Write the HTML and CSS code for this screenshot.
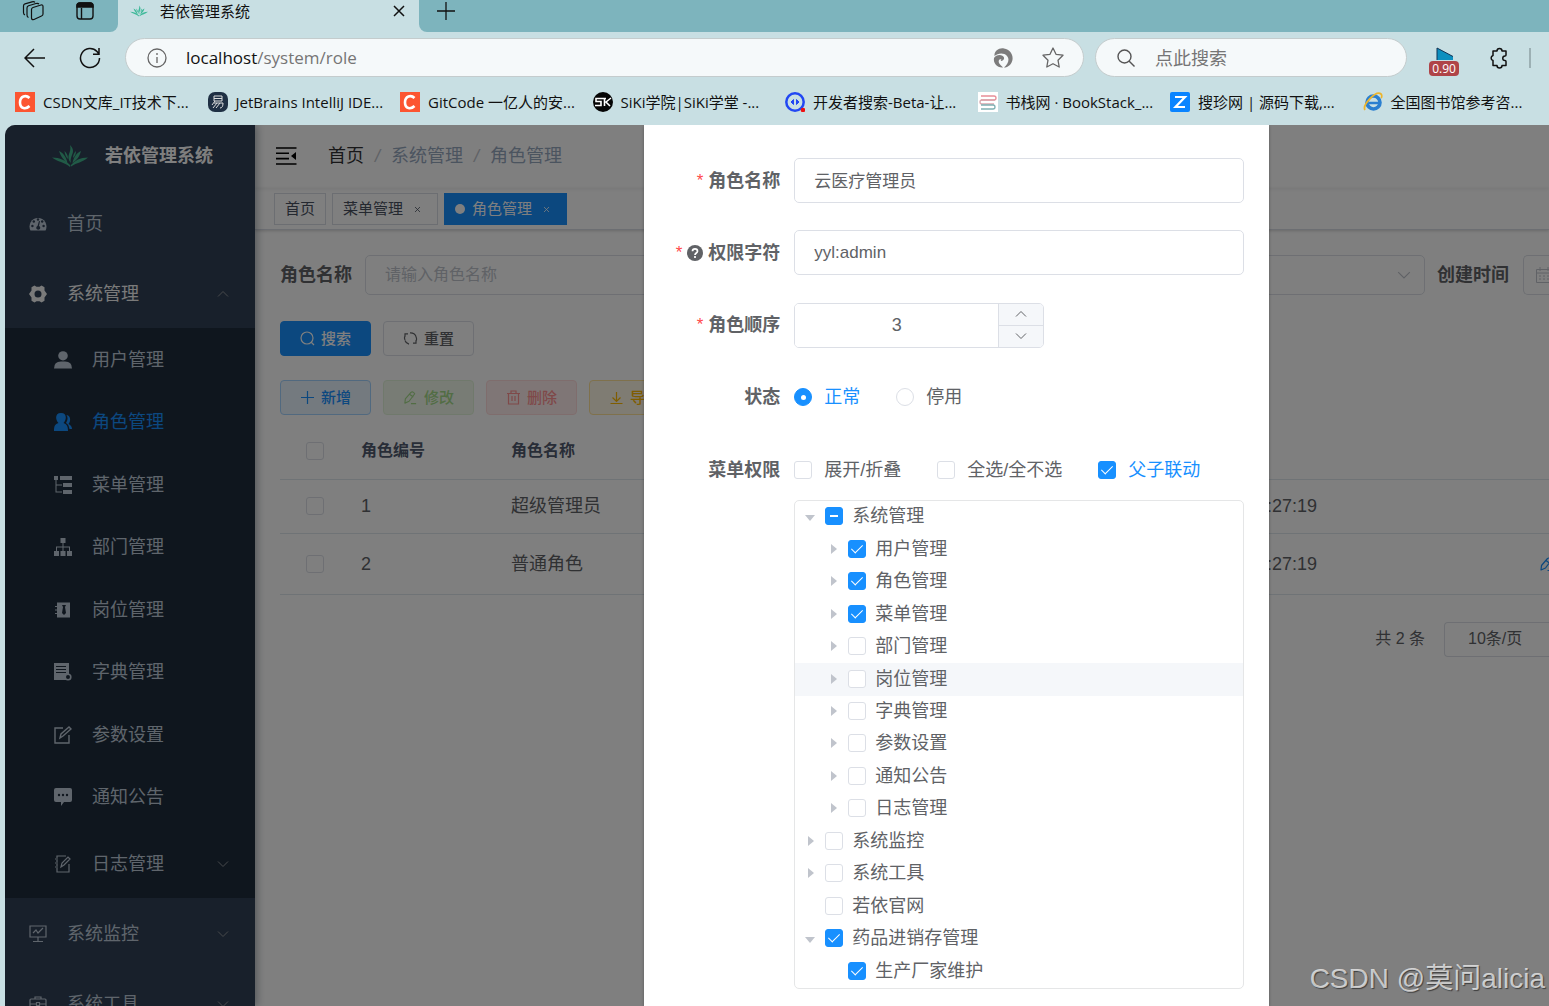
FILE: index.html
```html
<!DOCTYPE html>
<html lang="zh-CN">
<head>
<meta charset="utf-8">
<title>若依管理系统</title>
<link rel="stylesheet" href="styles.css">
</head>
<body>
<svg class="sprite" aria-hidden="true">
  <symbol id="leaf" viewBox="0 0 36 22">
    <path d="M18 0c3 3 4 6 2 10-1 3-2 5-1 8-3-3-3-6-2-9s2-5 1-9zM7 6c4 2 7 5 8.500 12C12 15 9 12 7 6zM29 6c-4 2-7 5-8.500 12 4-3 7-6 8.500-12zM12.500 6c2 2 3.500 4 3.500 8-2-2-3-4-3.500-8zM24 6c-2 2-3 4-3 7 2-2 3-4 3-7zM0 12.500c8 0 14 3 18.500 8l-.500 1.500C12 17 6 17 0 12.500zM36 12.500c-8 0-13 3-17 7.500v1.500c6-4 11-4 17-9z"/>
  </symbol>
  <symbol id="down" viewBox="0 0 12 12"><path d="M1 3.500l5 5 5-5" fill="none" stroke="currentColor"/></symbol>
  <symbol id="up" viewBox="0 0 12 12"><path d="M1 8.500l5-5 5 5" fill="none" stroke="currentColor"/></symbol>
  <symbol id="pen" viewBox="0 0 16 16"><path d="M2 14l.500-4.500L8.500 2.500q2-1.500 4 1.500L6.500 12 2 14zM7 4.500l4 3M8.500 14.500H14" fill="none" stroke="currentColor" stroke-width="1.200" stroke-linejoin="round"/></symbol>
  <symbol id="cmark" viewBox="0 0 20 20"><path d="M0 0h20v20H0z" fill="#fc5531"/><path d="M14.500 6C11 2.500 5 4 5 10.500s6 7 9.500 3.500" fill="none" stroke="#fff" stroke-width="2.600"/></symbol>
</svg>

<header class="browser">
  <div class="tabstrip">
    <div class="strip-left">
      <button class="ghost" aria-label="工作区"><svg width="22" height="20" viewBox="0 0 22 20" fill="none" stroke="#111" stroke-width="1.200" stroke-linejoin="round"><path d="M9.500 8.500q0-1.500 1.500-2l8-2.500q2-.500 2 1.500v7.500q0 1.500-1.500 2L12 18.500q-2.500.500-2.500-1.500zM6.500 16.500Q5 16 5 14V7q0-1.500 1.500-2.200L14 2.500q2-.500 3 .500M3 14q-1.500-.500-1.500-2.500V5q0-1.500 1.500-2.200L10 .800q2-.500 3 .500"/></svg></button>
      <button class="ghost" aria-label="标签页操作"><svg width="18" height="18" viewBox="0 0 18 18" fill="none" stroke="#111" stroke-width="1.400"><rect x="1" y="1" width="16" height="16" rx="3"/><path d="M5.500 6v11"/><path d="M1 5V4q0-3 3-3h10q3 0 3 3v1z" fill="#111"/></svg></button>
    </div>
    <div class="tab">
      <svg class="green" width="18" height="12"><use href="#leaf"/></svg>
      <span class="tab-title">若依管理系统</span>
      <button class="ghost" aria-label="关闭标签页"><svg width="12" height="12" viewBox="0 0 12 12" stroke="#111" stroke-width="1.500"><path d="M1 1l10 10M11 1L1 11"/></svg></button>
    </div>
    <div class="strip-right">
      <button class="ghost" aria-label="新建标签页"><svg width="18" height="18" viewBox="0 0 18 18" stroke="#111" stroke-width="1.300"><path d="M9 0v18M0 9h18"/></svg></button>
    </div>
  </div>

  <div class="toolbar">
    <button class="ghost" aria-label="后退"><svg width="22" height="20" viewBox="0 0 22 20" fill="none" stroke="#111" stroke-width="1.500"><path d="M10 1l-9 9 9 9M1 10h20"/></svg></button>
    <button class="ghost reload" aria-label="刷新"><svg width="22" height="22" viewBox="0 0 22 22" fill="none" stroke="#111" stroke-width="1.500"><path d="M20.500 11A9.500 9.500 0 1 1 18 4.600L20 7M20 1v6.200h-6"/></svg></button>
    <div class="pill address">
      <svg width="20" height="20" viewBox="0 0 20 20" fill="none" stroke="#666" stroke-width="1.300"><circle cx="10" cy="10" r="9"/><path d="M10 9v6M10 5v2"/></svg>
      <a class="url" href="#">localhost<span>/system/role</span></a>
      <svg width="20" height="20" viewBox="0 0 20 20" fill="#7c7c7c"><path d="M1.500 8C1 3 6-.500 11 .500c7 1 10 8 8 13-1.500 4-5 6-8 6 4-3 6-8 3-11.500S5 5 1.500 8z"/><path d="M1 10c2-4 9-4 10-.500.500 2-1 3-2.500 3.500-1 0-1-1 0-1.500-2-1-3.500 1-2.500 3.500 1 2 3 3 4 4.500C4 20 0 15 1 10z"/></svg>
      <svg class="star" width="22" height="21" viewBox="0 0 22 21" fill="none" stroke="#666" stroke-width="1.300" stroke-linejoin="round"><path d="M11 1l3 6.300 7 .900-5 5 1.200 6.800L11 16.700 4.800 20 6 13.200l-5-5 7-.900z"/></svg>
    </div>
    <div class="pill finder">
      <svg width="18" height="18" viewBox="0 0 18 18" fill="none" stroke="#555" stroke-width="1.400"><circle cx="7.500" cy="7.500" r="6.500"/><path d="M12 12l5.500 5.500"/></svg>
      <input type="text" placeholder="点此搜索" aria-label="点此搜索">
    </div>
    <button class="ghost speed" aria-label="播放速度"><svg width="20" height="14" viewBox="0 0 20 14"><path d="M3 1l16 8.500V13H3z" fill="#0d8fbf"/><path d="M3 13V1l16 8.500" fill="none" stroke="#135"/></svg><span>0.90</span></button>
    <button class="ghost" aria-label="扩展"><svg width="22" height="22" viewBox="0 0 22 22" fill="none" stroke="#111" stroke-width="1.500" stroke-linejoin="round"><path d="M5 4h4a2.500 2.500 0 0 1 5 0h4v4q0 1-1 1a2.200 2.200 0 0 0 0 4.500q1 0 1 1v4h-4a2.500 2.500 0 0 1-5 0H5v-5a2.600 2.600 0 0 1 0-5z"/></svg></button>
    <span class="divider"></span>
  </div>

  <nav class="bookmarks" aria-label="收藏夹">
    <a href="#"><svg width="20" height="20"><use href="#cmark"/></svg>CSDN文库_IT技术下...</a>
    <a href="#"><svg width="20" height="20" viewBox="0 0 20 20"><rect width="20" height="20" rx="7" fill="#1f3044"/><path d="M6 4h8v5H6zM6 6.500h8M7 9l-3 4M6 11h9q0 5-3 5M9 11l-4 5M12 11l-4 5" fill="none" stroke="#ddd"/></svg>JetBrains IntelliJ IDE...</a>
    <a href="#"><svg width="20" height="20"><use href="#cmark"/></svg>GitCode 一亿人的安...</a>
    <a href="#"><svg width="20" height="20" viewBox="0 0 20 20"><circle cx="10" cy="10" r="10" fill="#050505"/><path d="M9 6.500H3v3h5v4H2M8 6.500h5M11.500 7v7M18 6l-5 4 4 4" fill="none" stroke="#fff" stroke-width="1.600"/></svg>SiKi学院|SiKi学堂 -...</a>
    <a href="#"><svg width="20" height="20" viewBox="0 0 20 20"><circle cx="10" cy="10" r="8.700" fill="none" stroke="#2147f3" stroke-width="2.500"/><path d="M8.500 7.500L6 10l2.500 2.500zM11.500 7.500L14 10l-2.500 2.500z" fill="#2147f3" stroke="#2147f3"/><circle cx="18" cy="18" r="2.300" fill="#e11"/></svg>开发者搜索-Beta-让...</a>
    <a href="#"><svg width="20" height="20" viewBox="0 0 20 20" fill="none" stroke-width="1.300"><path d="M0 0h20v20H0z" fill="#fff"/><path d="M3 4h13q2 0 2 2t-2 2H3" stroke="#e88e98"/><path d="M17 8H4q-2 0-2 2t2 2h12" stroke="#d9a8ae"/><path d="M3 13h12q2 0 2 2t-2 2H3" stroke="#7fb0b2"/></svg>书栈网 · BookStack_...</a>
    <a href="#"><svg width="20" height="20" viewBox="0 0 20 20"><rect width="20" height="20" rx="2" fill="#0a84ff"/><path d="M5 5h10L5.500 15H15" fill="none" stroke="#fff" stroke-width="2.200"/></svg>搜珍网 | 源码下载,...</a>
    <a href="#"><svg width="20" height="20" viewBox="0 0 20 20" fill="none"><circle cx="10.500" cy="10.500" r="6.500" stroke="#2a7fd0" stroke-width="3.600"/><path d="M6 11h11" stroke="#2a7fd0" stroke-width="2.500"/><path d="M2 18C-1 13 13-2 18 2c1 1 1 3 0 4" stroke="#edb52c" stroke-width="1.800"/></svg>全国图书馆参考咨...</a>
  </nav>
</header>

<div class="app">
  <aside class="sidebar">
    <a class="brand" href="#"><svg width="36" height="22"><use href="#leaf"/></svg>若依管理系统</a>
    <nav aria-label="主菜单">
      <a class="item" href="#"><svg width="18" height="18" viewBox="0 0 18 18"><path d="M1.500 15.500A8.500 8.500 0 1 1 16.500 15.500z" fill="currentColor"/><g fill="#304156"><circle cx="9" cy="4.500" r="1.200"/><circle cx="4.800" cy="6.500" r="1.200"/><circle cx="13.200" cy="6.500" r="1.200"/><circle cx="3.400" cy="11" r="1.200"/><circle cx="14.600" cy="11" r="1.200"/><path d="M10 6l1 .300-1 4.700a2 2 0 1 1-1.500 0z"/></g></svg>首页</a>
      <a class="item open" href="#"><svg width="18" height="18" viewBox="0 0 18 18"><path fill="currentColor" fill-rule="evenodd" d="M5.500.500l2 1.300h3l2-1.300 3 1.700v3.300L18 9l-2.500 3.500v3.300l-3 1.700-2-1.300h-3l-2 1.300-3-1.700v-3.300L0 9l2.500-3.500V2.200zM9 5.500a3.500 3.500 0 1 0 0 7 3.500 3.500 0 0 0 0-7z"/></svg>系统管理<svg class="arrow" width="12" height="12"><use href="#up"/></svg></a>
      <div class="submenu">
        <a class="item" href="#"><svg width="18" height="18" viewBox="0 0 18 18" fill="currentColor"><ellipse cx="9" cy="4.800" rx="4.800" ry="4.600"/><path d="M0 17.500q0-7 7-7h4q7 0 7 7z"/></svg>用户管理</a>
        <a class="item active" href="#"><svg width="18" height="18" viewBox="0 0 18 18" fill="currentColor"><path d="M7 0c7 0 5 8 2.500 10 3 1 4.500 3 4.500 8H0c0-5 1-7 4.500-8C2 8 0 0 7 0z"/><path d="M12.500 2c5 1 4 7 2 9 2.500 1 3.500 3 3.500 5h-2.500c-.500-3-1.500-5-3.500-6 2-3 2-6 .500-8z"/></svg>角色管理</a>
        <a class="item" href="#"><svg width="18" height="18" viewBox="0 0 18 18" fill="currentColor"><path d="M0 0h4v4H0zM6 0h12v4H6zM9 7h9v4H9zM9 14h9v4H9zM1.500 4h1v11.500H8v1H1.500zM2 8.500h6v1H2z"/></svg>菜单管理</a>
        <a class="item" href="#"><svg width="18" height="18" viewBox="0 0 18 18" fill="currentColor"><path d="M6.500 0h5v5h-5zM0 13h5v5H0zM6.500 13h5v5h-5zM13 13h5v5h-5zM8.500 5h1v8h-1zM2 8.500h14V13h-1V9.500H3V13H2z"/></svg>部门管理</a>
        <a class="item" href="#"><svg width="18" height="18" viewBox="0 0 18 18"><path d="M3 1.500h13v15H3zM1 5h3v1H1zM1 8.500h3v1H1zM1 12h3v1H1z" fill="currentColor"/><path d="M8 4h4l-1 2 1 6-2 2-2-2 1-6zM5 6v1M5 11v1" fill="#1f2d3d"/></svg>岗位管理</a>
        <a class="item" href="#"><svg width="18" height="18" viewBox="0 0 18 18"><path d="M0 0h15v11l-3 6H0z" fill="currentColor"/><path d="M2 3.500h10M2 6.500h10M2 9.500h10" stroke="#1f2d3d"/><circle cx="14" cy="14" r="2.800" fill="#1f2d3d" stroke="currentColor" stroke-width="1.600"/></svg>字典管理</a>
        <a class="item" href="#"><svg width="18" height="18" viewBox="0 0 18 18" fill="none" stroke="currentColor" stroke-width="1.400"><path d="M9 2H1v15h14V9M6 12l1-4 8-7 2 2-8 7z"/></svg>参数设置</a>
        <a class="item" href="#"><svg width="18" height="18" viewBox="0 0 18 18"><path d="M2 0h14q2 0 2 2v10q0 2-2 2h-6l-3 4v-4H2q-2 0-2-2V2q0-2 2-2z" fill="currentColor"/><g fill="#1f2d3d"><circle cx="5" cy="7" r="1.200"/><circle cx="9" cy="7" r="1.200"/><circle cx="13" cy="7" r="1.200"/></g></svg>通知公告</a>
        <a class="item" href="#"><svg width="18" height="18" viewBox="0 0 18 18" fill="none" stroke="currentColor" stroke-width="1.200"><path d="M12 1H3v2M3 5v2M3 9v2M3 13v4h12V9M1 4h3M1 8h3M1 12h3M7 12l1-4 6-6 2 2-6 6z"/></svg>日志管理<svg class="arrow" width="12" height="12"><use href="#down"/></svg></a>
      </div>
      <a class="item" href="#"><svg width="18" height="18" viewBox="0 0 18 18" fill="none" stroke="currentColor" stroke-width="1.200"><path d="M1 1h16v11H1zM9 12v5M4 16.500h10M4 8l3-3 2 3 5-5"/></svg>系统监控<svg class="arrow" width="12" height="12"><use href="#down"/></svg></a>
      <a class="item" href="#"><svg width="18" height="18" viewBox="0 0 18 18" fill="none" stroke="currentColor" stroke-width="1.200"><rect x="1" y="4" width="16" height="12" rx="1"/><path d="M6 4V2h6v2M1 9h6M11 9h6M7.500 7.500h3v3h-3z"/></svg>系统工具<svg class="arrow" width="12" height="12"><use href="#down"/></svg></a>
    </nav>
  </aside>

  <main class="main">
    <div class="navbar">
      <button class="ghost" aria-label="折叠菜单"><svg width="21" height="18" viewBox="0 0 21 18"><path d="M0 1h20.500M0 6.300h13M0 11.600h13M0 17h20.500" stroke="#000" stroke-width="1.600"/><path d="M20 5v8l-5-4z"/></svg></button>
      <nav class="crumbs" aria-label="面包屑"><a href="#">首页</a><i>/</i><span>系统管理</span><i>/</i><span>角色管理</span></nav>
    </div>
    <nav class="tags" aria-label="标签">
      <a href="#">首页</a>
      <a href="#">菜单管理<svg width="7" height="7" viewBox="0 0 7 7" stroke="currentColor" stroke-width="0.800"><path d="M1 1l5 5M6 1L1 6"/></svg></a>
      <a class="current" href="#"><b></b>角色管理<svg width="7" height="7" viewBox="0 0 7 7" stroke="currentColor" stroke-width="0.800"><path d="M1 1l5 5M6 1L1 6"/></svg></a>
    </nav>
    <div class="content">
      <form class="filters">
        <label for="q-name">角色名称</label>
        <input id="q-name" type="text" placeholder="请输入角色名称">
        <label for="q-time">创建时间</label>
        <div class="date"><svg width="16" height="16" viewBox="0 0 16 16" fill="none" stroke="currentColor"><path d="M.500 2.500h15v13H.500zM.500 6h15M4 0v4M12 0v4M3 9h2M7 9h2M11 9h2M3 12h2M7 12h2M11 12h2"/></svg><input id="q-time" type="text"></div>
        <svg class="caret" width="14" height="14"><use href="#down"/></svg>
      </form>
      <div class="actions search-actions">
        <button class="btn primary"><svg width="15" height="15" viewBox="0 0 15 15" fill="none" stroke="currentColor" stroke-width="1.200"><circle cx="7" cy="7" r="6"/><path d="M11 11l3 3"/></svg>搜索</button>
        <button class="btn"><svg width="15" height="15" viewBox="0 0 15 15" fill="none" stroke="currentColor" stroke-width="1.200"><path d="M5 2.800H2v3M2 9a5.700 5.700 0 0 1 0-4.500M2 9.500q1 3 4 3.700M10 12.200h3v-3M13 10.500a5.700 5.700 0 0 0 0-5M13 5.500Q11.500 1.500 7 1.800"/></svg>重置</button>
      </div>
      <div class="actions">
        <button class="btn add"><svg width="15" height="15" viewBox="0 0 15 15" stroke="currentColor" stroke-width="1.200"><path d="M7.500 1v13M1 7.500h13"/></svg>新增</button>
        <button class="btn edit"><svg width="15" height="15"><use href="#pen"/></svg>修改</button>
        <button class="btn del"><svg width="15" height="15" viewBox="0 0 15 15" fill="none" stroke="currentColor" stroke-width="1.200"><path d="M1 3.500h13M5 3V1h5v2M2.500 3.500V14h10V3.500M6 6v5M9 6v5"/></svg>删除</button>
        <button class="btn export"><svg width="15" height="15" viewBox="0 0 15 15" fill="none" stroke="currentColor" stroke-width="1.200"><path d="M7.500 2v9M3.500 7.500l4 4 4-4M1.500 13.500h12"/></svg>导出</button>
      </div>
      <table class="roles">
        <colgroup><col class="c-check"><col class="c-id"><col><col class="c-time"><col class="c-ops"></colgroup>
        <thead><tr><th><input type="checkbox" aria-label="全选"></th><th>角色编号</th><th>角色名称</th><th></th><th></th></tr></thead>
        <tbody>
          <tr><td><input type="checkbox" aria-label="选择 1"></td><td>1</td><td>超级管理员</td><td>09:27:19</td><td></td></tr>
          <tr><td><input type="checkbox" aria-label="选择 2"></td><td>2</td><td>普通角色</td><td>09:27:19</td><td><svg width="16" height="16"><use href="#pen"/></svg></td></tr>
        </tbody>
      </table>
      <div class="pager"><span>共 2 条</span><select aria-label="每页条数"><option>10条/页</option></select></div>
    </div>
  </main>

  <div class="overlay">
    <section class="dialog" role="dialog" aria-label="修改角色">
      <form>
        <div class="fields">
          <label class="req" for="f-name">角色名称</label>
          <input id="f-name" class="text" type="text" value="云医疗管理员">
          <label class="req" for="f-key"><svg width="16" height="16" viewBox="0 0 16 16"><circle cx="8" cy="8" r="8" fill="#606266"/><path d="M5.500 6.200C5.500 3 10.500 3 10.500 6.200 10.500 8 8 8 8 10M8 11v2" fill="none" stroke="#fff" stroke-width="1.700"/></svg>权限字符</label>
          <input id="f-key" class="text" type="text" value="yyl:admin">
          <label class="req" for="f-sort">角色顺序</label>
          <div class="stepper">
            <input id="f-sort" type="number" value="3">
            <button type="button" aria-label="增加"><svg width="12" height="12"><use href="#up"/></svg></button>
            <button type="button" aria-label="减少"><svg width="12" height="12"><use href="#down"/></svg></button>
          </div>
          <span class="caption">状态</span>
          <div class="choices">
            <label><input type="radio" name="status" checked><span>正常</span></label>
            <label><input type="radio" name="status"><span>停用</span></label>
          </div>
          <span class="caption">菜单权限</span>
          <div class="choices">
            <label><input type="checkbox"><span>展开/折叠</span></label>
            <label><input type="checkbox"><span>全选/全不选</span></label>
            <label><input type="checkbox" checked><span>父子联动</span></label>
          </div>
        </div>
        <ul class="tree">
          <li class="expanded"><label><input class="partial" type="checkbox">系统管理</label></li>
          <li class="child closed"><label><input type="checkbox" checked>用户管理</label></li>
          <li class="child closed"><label><input type="checkbox" checked>角色管理</label></li>
          <li class="child closed"><label><input type="checkbox" checked>菜单管理</label></li>
          <li class="child closed"><label><input type="checkbox">部门管理</label></li>
          <li class="child closed hovered"><label><input type="checkbox">岗位管理</label></li>
          <li class="child closed"><label><input type="checkbox">字典管理</label></li>
          <li class="child closed"><label><input type="checkbox">参数设置</label></li>
          <li class="child closed"><label><input type="checkbox">通知公告</label></li>
          <li class="child closed"><label><input type="checkbox">日志管理</label></li>
          <li class="closed"><label><input type="checkbox">系统监控</label></li>
          <li class="closed"><label><input type="checkbox">系统工具</label></li>
          <li><label><input type="checkbox">若依官网</label></li>
          <li class="expanded"><label><input type="checkbox" checked>药品进销存管理</label></li>
          <li class="child"><label><input type="checkbox" checked>生产厂家维护</label></li>
        </ul>
      </form>
    </section>
  </div>
  <p class="watermark">CSDN @莫问alicia</p>
</div>
</body>
</html>
```
FILE: styles.css
```css
* { box-sizing: border-box; }
body {
  margin: 0;
  height: 100vh;
  display: flex;
  flex-direction: column;
  overflow: hidden;
  background: #c8dfe3;
  color: #606266;
  font: 18px/24px "Liberation Sans", "Noto Sans CJK SC", sans-serif;
}
a { color: inherit; text-decoration: none; }
button, input, select { font: inherit; color: inherit; margin: 0; }
svg { flex: none; display: block; }
.sprite { position: absolute; width: 0; height: 0; }
.ghost { border: 0; padding: 0; background: none; display: flex; }

/* Browser chrome */
.browser { flex: none; font-family: "Open Sans", "Noto Sans CJK SC", sans-serif; color: #111; }
.tabstrip { display: flex; height: 32px; }
.tabstrip > div { display: flex; align-items: center; padding-bottom: 10px; }
.strip-left { width: 118px; padding-left: 22px; gap: 32px; background: #7db4bd; border-bottom-right-radius: 8px; }
.tab { width: 301px; padding: 0 14px 0 12px; }
.green { fill: #3fb99a; }
.tab-title { flex: 1; padding-left: 12px; font-size: 15px; line-height: 20px; }
.strip-right { flex: 1; padding-left: 18px; background: #7db4bd; border-bottom-left-radius: 8px; }
.toolbar { display: flex; align-items: center; height: 52px; padding: 0 18px 1px 24px; }
.reload { margin: 0 24px 0 33px; }
.pill {
  display: flex;
  align-items: center;
  height: 39px;
  border: 1px solid #c4cccd;
  border-radius: 20px;
  background: #f5f9fa;
}
.address { flex: 1; padding: 0 19px 0 21px; }
.url { flex: 1; padding-left: 19px; font-size: 17px; }
.url span { color: #757575; }
.star { margin-left: 29px; }
.finder { width: 312px; margin: 0 22px 0 11px; padding: 0 21px; }
.finder input { flex: 1; min-width: 0; margin-left: 20px; border: 0; padding: 0; background: none; }
.finder input::placeholder { color: #757575; }
.speed { flex-direction: column; align-items: center; width: 30px; margin-right: 29px; padding-top: 8px; }
.speed span { width: 30px; border-radius: 4px; background: #af4448; color: #fff; font-size: 12px; line-height: 15px; }
.divider { width: 2px; height: 20px; margin-left: 19px; background: #9cb0b4; }
.bookmarks {
  display: grid;
  grid-template-columns: repeat(8, 1fr);
  align-items: center;
  height: 41px;
  margin-right: -6px;
  padding: 0 0 5px 15px;
  font-size: 15px;
}
.bookmarks a { display: flex; align-items: center; gap: 8px; white-space: nowrap; }

/* Application shell */
.app {
  position: relative;
  flex: 1;
  min-height: 0;
  display: flex;
  margin-left: 5px;
  overflow: hidden;
  border-top-left-radius: 10px;
  background: #fff;
}
.sidebar {
  position: relative;
  flex: none;
  width: 250px;
  background: #304156;
  color: #bfcbd9;
  box-shadow: 2px 0 8px rgba(0, 21, 41, .35);
}
.brand { display: flex; align-items: center; gap: 17px; height: 63px; padding: 0 0 1px 47px; color: #fff; font-weight: 700; }
.brand svg { fill: #43b68e; }
.item { display: flex; align-items: center; height: 70px; padding: 1px 26px 0 24px; gap: 20px; }
.item.open { color: #f4f4f5; }
.item.active { color: #1890ff; }
.arrow { margin-left: auto; color: #909399; }
.submenu { display: grid; grid-template-rows: repeat(8, 1fr) 70px; height: 570px; background: #1f2d3d; }
.submenu .item { height: auto; padding-left: 49px; }

.main { flex: 1; min-width: 0; }
.navbar { display: flex; align-items: center; gap: 31px; height: 63px; padding: 0 0 2px 21px; box-shadow: 0 1px 4px rgba(0, 21, 41, .08); }
.crumbs a { color: #303133; }
.crumbs span { color: #97a8be; }
.crumbs i { margin: 0 11px; color: #c0c4cc; }
.tags {
  display: flex;
  align-items: center;
  gap: 6px;
  height: 42px;
  padding-left: 19px;
  border-bottom: 1px solid #d8dce5;
  box-shadow: 0 1px 3px rgba(0, 0, 0, .18);
  font-size: 15px;
}
.tags a { display: flex; align-items: center; height: 32px; padding: 0 10px; border: 1px solid #d8dce5; color: #495060; }
.tags svg { margin: 2px 6px 0 11px; }
.tags .current { background: #1890ff; border-color: #1890ff; color: #fff; }
.tags b { width: 10px; height: 10px; margin-right: 7px; border-radius: 50%; background: #fff; }

.content { padding: 25px 0 0 25px; }
.filters { position: relative; display: flex; align-items: center; font-size: 16px; }
.filters label { font-size: 18px; font-weight: 700; }
.filters > input { flex: 1; min-width: 0; height: 40px; margin: 0 12px 0 13px; padding: 0 19px; border: 1px solid #dcdfe6; border-radius: 5px; background: #fff; }
.filters input::placeholder { color: #c0c4cc; }
.caret { position: absolute; right: 138px; color: #c0c4cc; }
.date { display: flex; align-items: center; width: 26px; height: 40px; margin-left: 14px; padding-left: 12px; border: 1px solid #dcdfe6; border-right: 0; border-radius: 5px 0 0 5px; overflow: hidden; color: #c0c4cc; }
.date input { width: 0; border: 0; padding: 0; }
.actions { display: flex; gap: 12px; }
.search-actions { margin: 26px 0 24px; }
.btn {
  display: flex;
  align-items: center;
  justify-content: center;
  gap: 6px;
  width: 91px;
  height: 35px;
  padding: 0;
  border: 1px solid #dcdfe6;
  border-radius: 4px;
  background: #fff;
  font-size: 15px;
  font-weight: 500;
}
.primary { background: #1890ff; border-color: #1890ff; color: #fff; }
.add { background: #e8f4ff; border-color: #a3d3ff; color: #1890ff; }
.edit { background: #f0f9eb; border-color: #e1f3d8; color: #a4da89; }
.del { background: #ffeded; border-color: #ffdbdb; color: #ff9292; }
.export { background: #fff8e6; border-color: #ffe399; color: #ffba00; }

.roles { width: 100%; margin-top: 8px; border-collapse: collapse; table-layout: fixed; }
.c-check { width: 69px; }
.c-id { width: 150px; }
.c-time { width: 180px; }
.c-ops { width: 232px; }
.roles th, .roles td { padding: 0 12px; border-bottom: 1px solid #dfe6ec; text-align: left; overflow: hidden; }
.roles th { height: 56px; font-size: 16px; color: #515a6e; }
.roles td { height: 54px; }
.roles tr:last-child td { height: 61px; }
.roles tr > :first-child { padding-left: 26px; }
.roles td:nth-child(4) { padding-right: 0; text-align: right; }
.roles td:last-child { padding: 0 0 0 222px; color: #1890ff; }
.pager { display: flex; justify-content: flex-end; align-items: center; gap: 19px; margin-top: 27px; font-size: 16px; }
.pager select { appearance: none; width: 105px; height: 35px; padding: 0 0 0 23px; border: 1px solid #dcdfe6; border-right: 0; border-radius: 4px 0 0 4px; background: #fff; }

/* Check boxes and radios */
input[type="checkbox"], input[type="radio"] {
  appearance: none;
  flex: none;
  display: grid;
  place-items: center;
  width: 18px;
  height: 18px;
  border: 1px solid #dcdfe6;
  border-radius: 3px;
  background: #fff;
}
input[type="radio"] { border-radius: 50%; }
input[type="checkbox"]:checked, input[type="radio"]:checked, input.partial { background: #1890ff; border-color: #1890ff; }
input[type="checkbox"]:checked::after { content: ""; width: 5px; height: 10px; margin-bottom: 3px; border: solid #fff; border-width: 0 1px 1px 0; transform: rotate(45deg); }
input[type="radio"]:checked::after { content: ""; width: 5px; height: 5px; border-radius: 50%; background: #fff; }
input.partial::after { content: ""; width: 8px; height: 2px; background: #fff; }

/* Role dialog */
.overlay { position: absolute; inset: 0; display: grid; grid-template-columns: 16fr 625px 7fr; background: rgba(0, 0, 0, .5); }
.dialog { grid-column: 2; padding: 33px 25px 0; background: #fff; box-shadow: 0 1px 3px rgba(0, 0, 0, .3); }
.fields { display: grid; grid-template-columns: 125px 1fr; grid-template-rows: repeat(5, 45px); align-content: space-between; align-items: center; height: 334px; }
.fields > label, .caption { display: flex; align-items: center; justify-content: flex-end; padding-right: 14px; font-weight: 700; white-space: nowrap; }
.fields > label svg { margin-right: 5px; }
.req::before { content: "*"; margin-right: 5px; color: #ff4949; font-size: 17px; font-weight: 400; }
.text { width: 100%; height: 45px; padding: 0 19px; border: 1px solid #dcdfe6; border-radius: 5px; background: #fff; font-size: 17px; }
#f-name { padding-bottom: 3px; }
.stepper { display: grid; grid-template: 1fr 1fr / 1fr 45px; width: 250px; height: 45px; border: 1px solid #dcdfe6; border-radius: 5px; overflow: hidden; }
.stepper input { grid-row: span 2; min-width: 0; border: 0; padding: 0; text-align: center; appearance: textfield; }
.stepper input::-webkit-inner-spin-button { appearance: none; }
.stepper button { display: grid; place-items: center; padding: 0; border: 0; border-left: 1px solid #dcdfe6; background: #f5f7fa; }
.stepper button + button { border-top: 1px solid #dcdfe6; }
.choices { display: flex; gap: 36px; }
.choices label { display: flex; align-items: center; gap: 12px; white-space: nowrap; }
.choices input:checked + span { color: #1890ff; }
.tree { display: grid; grid-auto-rows: 1fr; height: 489px; margin: 8px 0 0 125px; padding: 0; border: 1px solid #e5e6e7; border-radius: 5px; list-style: none; }
.tree li { display: flex; align-items: center; padding-bottom: 2px; }
.tree li::before { content: ""; width: 0; height: 0; margin: 0 14px 0 16px; }
.tree .child { padding-left: 23px; }
.tree .closed::before { margin: 0 11px 0 13px; border: solid transparent; border-width: 5px 0 5px 6px; border-left-color: #c0c4cc; }
.tree .expanded::before { margin: 3px 10px 0; border: solid transparent; border-width: 6px 5px 0; border-top-color: #c0c4cc; }
.tree label { display: flex; align-items: center; gap: 9px; }
.tree .hovered { background: #f5f7fa; }

.watermark { position: absolute; right: 4px; bottom: 11px; margin: 0; color: rgba(255, 255, 255, .7); font-size: 28px; line-height: 32px; text-shadow: 1px 1px 1px rgba(0, 0, 0, .5); }
```
